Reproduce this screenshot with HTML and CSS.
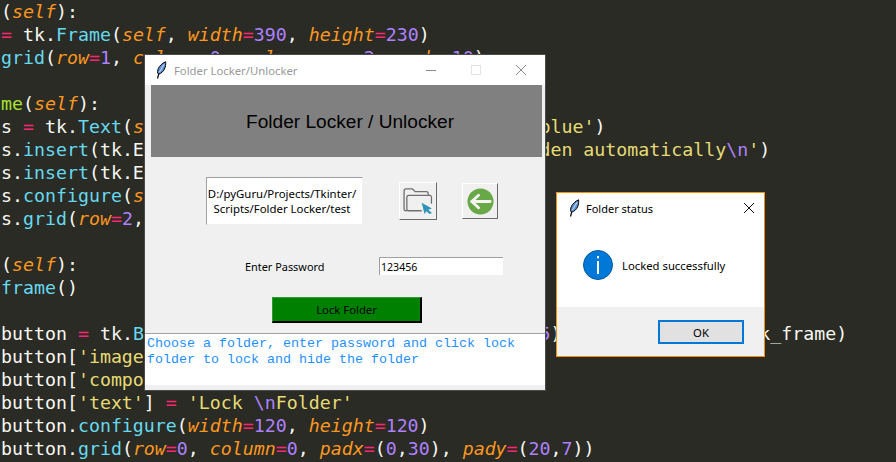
FILE: index.html
```html
<!DOCTYPE html>
<html lang="en">
<head>
<meta charset="utf-8">
<title>Folder Locker</title>
<link rel="stylesheet" href="styles.css">
</head>
<body>
<svg class="defs" width="0" height="0" aria-hidden="true">
  <symbol id="feather" viewBox="0 0 12 18">
    <path d="M2.6 17.5 C3 15 3.4 14 4 12.4" fill="none" stroke="#000" stroke-width="1.3"/>
    <path d="M3.4 13.2 C1.2 10.6 3.4 4 10.6 0.8 C11.2 5.2 9.4 11.6 3.4 13.2Z" fill="#5b8fd6" stroke="#000" stroke-width="1"/>
    <path d="M4.2 11.4 L9.2 3.2" stroke="#cfe0f5" stroke-width="1" fill="none"/>
  </symbol>
</svg>
<pre class="code"><span class="p">(</span><span class="o">self</span><span class="p">):</span>
<span class="k">=</span> tk.<span class="c">Frame</span>(<span class="o">self</span>, <span class="o">width</span><span class="k">=</span><span class="n">390</span>, <span class="o">height</span><span class="k">=</span><span class="n">230</span>)
<span class="c">grid</span>(<span class="o">row</span><span class="k">=</span><span class="n">1</span>, <span class="o">column</span><span class="k">=</span><span class="n">0</span>, <span class="o">columnspan</span><span class="k">=</span><span class="n">2</span>, <span class="o">pady</span><span class="k">=</span><span class="n">10</span>)

<span class="g">me</span>(<span class="o">self</span>):
s <span class="k">=</span> tk.<span class="c">Text</span>(<span class="o">self</span>, <span class="o">width</span><span class="k">=</span><span class="n">100</span>, <span class="o">height</span><span class="k">=</span><span class="n">4</span>, <span class="o">bd</span><span class="k">=</span><span class="n">0</span>, <span class="o">fg</span><span class="k">=</span><span class="y">'blue'</span>)
s.<span class="c">insert</span>(tk.END, <span class="y">'Your folder gets locked and hidden automatically</span><span class="n">\n</span><span class="y">'</span>)
s.<span class="c">insert</span>(tk.END)
s.<span class="c">configure</span>(<span class="o">state</span>)
s.<span class="c">grid</span>(<span class="o">row</span><span class="k">=</span><span class="n">2</span>,

(<span class="o">self</span>):
<span class="c">frame</span>()

button <span class="k">=</span> tk.<span class="c">Button</span>(<span class="o">self</span>, <span class="o">width</span><span class="k">=</span><span class="n">100</span>, <span class="o">height</span><span class="k">=</span><span class="n">4</span>, <span class="o">bd</span><span class="k">=</span><span class="n">5</span>)                  k_frame)
button[<span class="y">'image'</span>]
button[<span class="y">'compound'</span>]
button[<span class="y">'text'</span>] <span class="k">=</span> <span class="y">'Lock </span><span class="n">\n</span><span class="y">Folder'</span>
button.<span class="c">configure</span>(<span class="o">width</span><span class="k">=</span><span class="n">120</span>, <span class="o">height</span><span class="k">=</span><span class="n">120</span>)
button.<span class="c">grid</span>(<span class="o">row</span><span class="k">=</span><span class="n">0</span>, <span class="o">column</span><span class="k">=</span><span class="n">0</span>, <span class="o">padx</span><span class="k">=</span>(<span class="n">0</span>,<span class="n">30</span>), <span class="o">pady</span><span class="k">=</span>(<span class="n">20</span>,<span class="n">7</span>))</pre>

<section class="window main-window">
  <header class="titlebar">
    <svg class="feather"><use href="#feather"/></svg>
    <span class="title title-inactive">Folder Locker/Unlocker</span>
    <span class="controls">
      <svg class="ctl" viewBox="0 0 10 10"><path d="M0 5.5H10" stroke="#8a8a8a" fill="none"/></svg>
      <svg class="ctl" viewBox="0 0 10 10"><rect x=".5" y=".5" width="9" height="9" stroke="#e3e3e3" fill="none"/></svg>
      <svg class="ctl" viewBox="0 0 10 10"><path d="M0 0L10 10M10 0L0 10" stroke="#8a8a8a" fill="none"/></svg>
    </span>
  </header>
  <h1 class="banner">Folder Locker / Unlocker</h1>
  <div class="path-row">
    <div class="path-box">D:/pyGuru/Projects/Tkinter/<br>Scripts/Folder Locker/test</div>
    <button class="raised folder-btn" type="button" aria-label="Choose folder">
      <svg width="30" height="26" viewBox="0 0 32 28">
        <path d="M4 24.5H3C1.8 24.5 1 23.7 1 22.5V3C1 1.8 1.8 1 3 1H10L13 4H25C26.2 4 27 4.8 27 6V8" fill="none" stroke="#707070" stroke-width="1.4"/>
        <path d="M6 24.5C4.8 24.5 4 23.7 4 22.5V10C4 8.8 4.8 8 6 8H29C30 8 30.5 8.8 30.5 10V17M20 24.5H6" fill="none" stroke="#707070" stroke-width="1.4"/>
        <path d="M20 16L31 22L27 23.5L31 27L28.5 28L25 25L23 28Z" fill="#2f94b8"/>
      </svg>
    </button>
    <button class="raised back-btn" type="button" aria-label="Back">
      <svg width="27" height="27" viewBox="0 0 28 28">
        <circle cx="14" cy="14" r="13.5" fill="#69a846"/>
        <path d="M5 14H24" stroke="#f4f4f4" stroke-width="3" stroke-linecap="round"/>
        <path d="M12 7.5L5 14L12 20.5" fill="none" stroke="#f4f4f4" stroke-width="3" stroke-linecap="round" stroke-linejoin="round"/>
      </svg>
    </button>
  </div>
  <div class="password-row">
    <label class="password-label" for="pw">Enter Password</label>
    <input class="password-input" id="pw" type="text" value="123456">
  </div>
  <button class="lock-btn" type="button">Lock Folder</button>
  <div class="help">Choose a folder, enter password and click lock<br>folder to lock and hide the folder</div>
</section>

<section class="window dialog">
  <header class="dialog-title">
    <svg class="feather"><use href="#feather"/></svg>
    <span class="title dialog-name">Folder status</span>
    <svg class="dialog-close" viewBox="0 0 10 10"><path d="M0 0L10 10M10 0L0 10" stroke="#111" fill="none"/></svg>
  </header>
  <div class="dialog-body">
    <svg class="info" viewBox="0 0 30 30">
      <circle cx="15" cy="15" r="14.5" fill="#0078d7" stroke="#005a9e" stroke-width="1"/>
      <rect x="14" y="6" width="2" height="2.4" fill="#fff"/>
      <rect x="14" y="11" width="2" height="13" fill="#fff"/>
    </svg>
    <span>Locked successfully</span>
  </div>
  <footer class="dialog-foot">
    <button class="ok-btn" type="button">OK</button>
  </footer>
</section>
</body>
</html>
```

FILE: styles.css
```css
* {
  box-sizing: border-box;
}

html,
body {
  margin: 0;
  width: 896px;
  height: 462px;
  overflow: hidden;
  background: #2a2b25;
}

.defs {
  display: block;
  height: 0;
}

.code {
  margin: 0;
  padding: 0 0 0 1px;
  font: 18.25px/23px "DejaVu Sans Mono", monospace;
  color: #f8f8f2;
  white-space: pre;
}

.k { color: #f92672; }
.c { color: #66d9ef; }
.g { color: #a6e22e; }
.y { color: #e6db74; }
.n { color: #ae81ff; }
.o { color: #fd971f; font-style: italic; }

.window {
  position: absolute;
  display: flex;
  flex-direction: column;
  font: 11.3px "Noto Sans", sans-serif;
  color: #000;
  background: #f0f0f0;
}

.main-window {
  left: 144px;
  top: 54px;
  width: 402px;
  height: 337px;
  border: 1px solid #4b4b4b;
}

.titlebar {
  display: flex;
  align-items: center;
  height: 30px;
  padding-left: 10px;
  background: #fff;
  flex: none;
}

.feather {
  width: 12px;
  height: 18px;
  flex: none;
}

.title {
  margin-left: 7px;
}

.title-inactive {
  color: #999;
}

.dialog-name {
  margin-left: 6px;
  font-size: 11px;
}

.controls {
  display: flex;
  gap: 35px;
  margin-left: auto;
  margin-right: 19px;
}

.ctl {
  width: 10px;
  height: 10px;
}

.banner {
  display: flex;
  align-items: center;
  justify-content: center;
  height: 72px;
  margin: 0 3px 0 6px;
  padding: 2px 0 0 7px;
  background: #808080;
  font: 19.1px "Liberation Sans", sans-serif;
  flex: none;
}

.path-row {
  display: flex;
  align-items: center;
  margin: 20px 0 0 61px;
}

.path-box {
  width: 157px;
  height: 48px;
  display: flex;
  align-items: center;
  justify-content: center;
  padding-right: 5px;
  text-align: center;
  line-height: 15px;
  font-size: 11.4px;
  background: #fff;
  border: 1px solid #f0f0f0;
  border-top-color: #a0a0a0;
  border-left-color: #a0a0a0;
  white-space: nowrap;
}

.raised {
  display: flex;
  align-items: center;
  justify-content: center;
  padding: 0;
  background: #f0f0f0;
  border: 1px solid #fff;
  border-right-color: #696969;
  border-bottom-color: #696969;
}

.folder-btn {
  width: 38px;
  height: 38px;
  margin-left: 36px;
}

.back-btn {
  width: 36px;
  height: 36px;
  margin-left: 25px;
}

.password-row {
  display: flex;
  align-items: center;
  margin: 32px 0 0 100px;
}

.password-label {
  width: 134px;
  font-size: 10.9px;
}

.password-input {
  width: 124px;
  height: 18px;
  padding: 0 0 0 1px;
  border: 0;
  border-top: 1px solid #a0a0a0;
  border-left: 1px solid #a0a0a0;
  background: #fff;
  font: 10.6px "Noto Sans", sans-serif;
  color: #000;
  border-radius: 0;
  outline: 0;
}

.lock-btn {
  width: 150px;
  height: 26px;
  margin: 22px 0 0 127px;
  padding: 0;
  background: #008000;
  border: 1px solid #2f9a2f;
  border-right: 2px solid #000;
  border-bottom: 2px solid #000;
  font: 11.3px "Noto Sans", sans-serif;
  color: #000;
}

.help {
  height: 52px;
  margin-top: 10px;
  padding: 2px 2px 0;
  background: #fff;
  border-top: 1px solid #a0a0a0;
  font: 13.33px/16px "Liberation Mono", monospace;
  color: #1e90ff;
  white-space: nowrap;
}

.dialog {
  left: 556px;
  top: 192px;
  width: 209px;
  height: 165px;
  border: 1px solid #f29100;
}

.dialog-title {
  display: flex;
  align-items: center;
  height: 30px;
  padding-left: 11px;
  background: #fff;
  flex: none;
}

.dialog-close {
  width: 10px;
  height: 10px;
  margin-left: auto;
  margin-right: 10px;
}

.dialog-body {
  display: flex;
  align-items: center;
  gap: 9px;
  height: 84px;
  padding: 4px 0 4px 26px;
  background: #fff;
  flex: none;
}

.info {
  width: 30px;
  height: 30px;
  flex: none;
}

.dialog-foot {
  display: flex;
  justify-content: flex-end;
  padding: 13px 20px 0 0;
}

.ok-btn {
  width: 86px;
  height: 24px;
  padding: 0;
  background: #e1e1e1;
  border: 2px solid #0078d7;
  font: 11.3px "Noto Sans", sans-serif;
  color: #000;
}
```
